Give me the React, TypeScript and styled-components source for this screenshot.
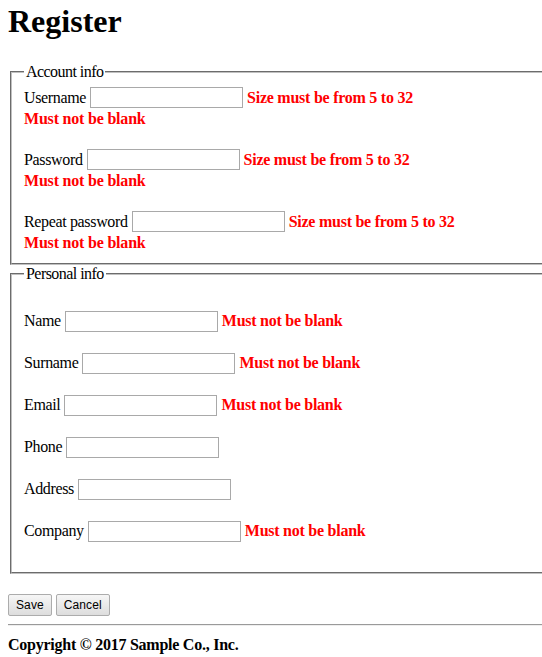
import React from "react";
import styled, { createGlobalStyle } from "styled-components";

const GlobalStyle = createGlobalStyle`
  html, body {
    margin: 0;
    padding: 0;
    background: #ffffff;
    overflow: hidden;
  }
  body {
    font-family: "Liberation Serif", "Times New Roman", serif;
    font-size: 16px;
    color: #000000;
  }
`;

const Page = styled.div`
  width: 560px;
  padding: 3px 0 0 8px;
`;

const Title = styled.h1`
  margin: 0 0 23px;
  font-size: 32px;
  font-weight: bold;
  line-height: 37px;
`;

const Fieldset = styled.fieldset`
  margin: 0 2px;
  border: 2px groove #c0c0c0;
  padding: 5.6px 12px 10px;
  min-width: 0;
`;

const Legend = styled.legend`
  padding: 0 2px;
  font-size: 16px;
  letter-spacing: -0.55px;
`;

const FieldList = styled.div<{ $spacious?: boolean }>`
  display: flex;
  flex-direction: column;
  gap: 20px;
  padding: ${(p) => (p.$spacious ? "22px 0 20px" : "0")};
`;

const FieldGroup = styled.div`
  display: flex;
  flex-direction: column;
`;

const FieldLine = styled.div`
  display: flex;
  align-items: center;
  height: 22px;
  white-space: nowrap;
`;

const Label = styled.label`
  margin-right: 4px;
  letter-spacing: -0.35px;
`;

const TextInput = styled.input`
  box-sizing: border-box;
  width: 153px;
  height: 21px;
  border: 1px solid #a9a9a9;
  padding: 1px 2px;
  font: 13px "Liberation Sans", Arial, sans-serif;
  margin: 0 4px 0 0;
  outline: none;
`;

const ErrorText = styled.span`
  color: #ff0000;
  font-weight: bold;
  letter-spacing: -0.25px;
`;

const ErrorLine = styled.div`
  height: 20px;
  display: flex;
  align-items: center;
  color: #ff0000;
  font-weight: bold;
  letter-spacing: -0.2px;
`;

const Actions = styled.div`
  display: flex;
  gap: 4px;
  margin-top: 20px;
`;

const Button = styled.button`
  height: 22px;
  padding: 0 7px;
  font: 12px "Liberation Sans", Arial, sans-serif;
  letter-spacing: 0.1px;
  color: #000;
  background: linear-gradient(#f6f6f6, #dddddd);
  border: 1px solid #acacac;
  border-radius: 2px;
`;

const Rule = styled.hr`
  margin: 8px 0 0;
  border: 0;
  border-top: 1px solid #9a9a9a;
  border-bottom: 1px solid #eeeeee;
`;

const Footer = styled.p`
  margin: 10px 0 0;
  font-weight: bold;
  letter-spacing: -0.25px;
`;

type Field = { label: string; size?: boolean; blank?: boolean };

const account: Field[] = [
  { label: "Username", size: true, blank: true },
  { label: "Password", size: true, blank: true },
  { label: "Repeat password", size: true, blank: true },
];

const personal: Field[] = [
  { label: "Name", blank: true },
  { label: "Surname", blank: true },
  { label: "Email", blank: true },
  { label: "Phone" },
  { label: "Address" },
  { label: "Company", blank: true },
];

function AccountField({ f }: { f: Field }) {
  return (
    <FieldGroup>
      <FieldLine>
        <Label>{f.label}</Label>
        <TextInput type="text" />
        <ErrorText>Size must be from 5 to 32</ErrorText>
      </FieldLine>
      <ErrorLine>Must not be blank</ErrorLine>
    </FieldGroup>
  );
}

function PersonalField({ f }: { f: Field }) {
  return (
    <FieldGroup>
      <FieldLine>
        <Label>{f.label}</Label>
        <TextInput type="text" />
        {f.blank && <ErrorText>Must not be blank</ErrorText>}
      </FieldLine>
    </FieldGroup>
  );
}

export default function App() {
  return (
    <>
      <GlobalStyle />
      <Page>
        <Title>Register</Title>
        <Fieldset>
          <Legend>Account info</Legend>
          <FieldList>
            {account.map((f) => (
              <AccountField key={f.label} f={f} />
            ))}
          </FieldList>
        </Fieldset>
        <Fieldset>
          <Legend>Personal info</Legend>
          <FieldList $spacious>
            {personal.map((f) => (
              <PersonalField key={f.label} f={f} />
            ))}
          </FieldList>
        </Fieldset>
        <Actions>
          <Button type="button">Save</Button>
          <Button type="button">Cancel</Button>
        </Actions>
        <Rule />
        <Footer>Copyright © 2017 Sample Co., Inc.</Footer>
      </Page>
    </>
  );
}
